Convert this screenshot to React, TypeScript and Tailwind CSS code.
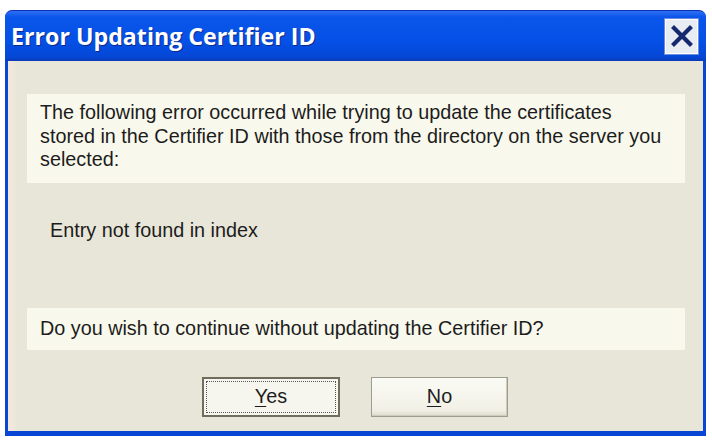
import React from "react";

export default function App() {
  return (
    <div className="w-[712px] h-[441px] bg-white pt-[10px] pl-[5px] overflow-hidden">
      <div className="w-[701px] h-[426px] flex flex-col">
        {/* Title bar */}
        <div className="h-[51px] shrink-0 rounded-t-[7px] border-t border-[#0831b8] bg-[linear-gradient(to_bottom,#2f6ff2_0%,#0a56ea_12%,#0550e6_60%,#0447d6_92%,#0a3bb8_100%)] flex items-center justify-between pl-[6px] pr-[8px]">
          <span className="text-white font-bold text-[23.2px] [font-family:'Open_Sans','DejaVu_Sans',sans-serif] [text-shadow:1px_1px_0_#0a2a8a]">
            Error Updating Certifier ID
          </span>
          <div className="w-[33px] h-[35px] bg-[#e8ecf3] border border-[#ffffff] shadow-[0_0_0_1px_#6a8be0] flex items-center justify-center">
            <svg width="22" height="22" viewBox="0 0 22 22">
              <path d="M3 3 L19 19 M19 3 L3 19" stroke="#16296e" strokeWidth="4.2" strokeLinecap="square" />
            </svg>
          </div>
        </div>
        {/* Body */}
        <div className="flex-1 border-x-[3px] border-b-[5px] border-[#0a46d4] bg-[#e8e6d8] flex flex-col [font-family:'Liberation_Sans',Arial,sans-serif] text-[#1c1c1c] text-[19.8px]">
          <div className="flex-1 flex flex-col bg-[linear-gradient(to_right,#f4e6dc_0px,#efe9dc_4px,#e8e6d8_10px)]">
            <div className="mt-[33px] ml-[19px] mr-[18px] h-[89px] bg-[#f9f8ec] pl-[13px] pt-[7px] leading-[23.5px] whitespace-nowrap">
              The following error occurred while trying to update the certificates
              <br />
              stored in the Certifier ID with those from the directory on the server you
              <br />
              selected:
            </div>
            <div className="mt-[35px] ml-[42px] leading-[24px]">Entry not found in index</div>
            <div className="mt-[66px] ml-[19px] mr-[18px] h-[42px] bg-[#f9f8ec] pl-[13px] flex items-center">
              Do you wish to continue without updating the Certifier ID?
            </div>
            <div className="mt-[27px] flex gap-[31px] ml-[194px]">
              <button className="w-[138px] h-[40px] border-2 border-[#6f6e5e] bg-[#f6f5ee] p-[2px]">
                <div className="w-full h-full border border-dotted border-[#555] flex items-center justify-center">
                  <span><span className="underline underline-offset-[3px]">Y</span>es</span>
                </div>
              </button>
              <button className="w-[137px] h-[40px] border border-[#9e9c8c] bg-[linear-gradient(to_bottom,#fbfbf6,#f1f0e6_85%,#dcdacb)] shadow-[inset_-1px_-1px_0_#cdcbbd] flex items-center justify-center">
                <span><span className="underline underline-offset-[3px]">N</span>o</span>
              </button>
            </div>
          </div>
        </div>
      </div>
    </div>
  );
}
